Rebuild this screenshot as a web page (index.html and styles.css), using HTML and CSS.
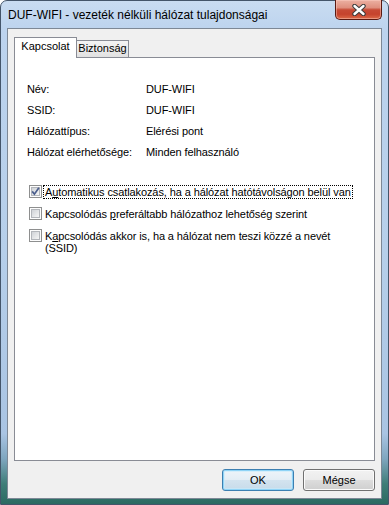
FILE: index.html
```html
<!DOCTYPE html>
<html lang="hu">
<head>
<meta charset="utf-8">
<title>DUF-WIFI - vezeték nélküli hálózat tulajdonságai</title>
<link rel="stylesheet" href="styles.css">
</head>
<body>
<div class="window">
  <div class="titlebar">
    <span class="title">DUF-WIFI - vezeték nélküli hálózat tulajdonságai</span>
    <button class="close" type="button" aria-label="Bezárás">
      <svg width="14" height="12" viewBox="0 0 14 12">
        <path d="M2.5 2 L11.5 10 M11.5 2 L2.5 10" stroke="#3b3b3b" stroke-width="4.4" stroke-linecap="round" fill="none"/>
        <path d="M2.5 2 L11.5 10 M11.5 2 L2.5 10" stroke="#ffffff" stroke-width="2.4" stroke-linecap="round" fill="none"/>
      </svg>
    </button>
  </div>
  <div class="client">
    <div class="tabs">
      <div class="tab active">Kapcsolat</div>
      <div class="tab">Biztonság</div>
    </div>
    <div class="panel">
      <dl class="props">
        <div class="row"><dt>Név:</dt><dd>DUF-WIFI</dd></div>
        <div class="row"><dt>SSID:</dt><dd>DUF-WIFI</dd></div>
        <div class="row"><dt>Hálózattípus:</dt><dd>Elérési pont</dd></div>
        <div class="row"><dt>Hálózat elérhetősége:</dt><dd>Minden felhasználó</dd></div>
      </dl>
      <div class="checks">
        <div class="check">
          <svg class="cb" width="13" height="13" viewBox="0 0 13 13">
            <defs><linearGradient id="cg1" x1="0" y1="0" x2="1" y2="1"><stop offset="0" stop-color="#cdd0d5"/><stop offset="1" stop-color="#f8f8f8"/></linearGradient></defs>
            <rect x="0.5" y="0.5" width="12" height="12" fill="#fdfdfd" stroke="#8e8f8f"/>
            <rect x="2.5" y="2.5" width="8" height="8" fill="url(#cg1)" stroke="#b3b6bb"/>
            <path d="M3.2 6.4 L5.4 9.2 L9.9 2.8" fill="none" stroke="#4a5d8c" stroke-width="1.7"/>
          </svg>
          <span class="lbl focus">A<u>u</u>tomatikus csatlakozás, ha a hálózat hatótávolságon belül van</span>
        </div>
        <div class="check">
          <svg class="cb" width="13" height="13" viewBox="0 0 13 13">
            <defs><linearGradient id="cg2" x1="0" y1="0" x2="1" y2="1"><stop offset="0" stop-color="#cdd0d5"/><stop offset="1" stop-color="#f8f8f8"/></linearGradient></defs>
            <rect x="0.5" y="0.5" width="12" height="12" fill="#fdfdfd" stroke="#8e8f8f"/>
            <rect x="2.5" y="2.5" width="8" height="8" fill="url(#cg2)" stroke="#b3b6bb"/>
          </svg>
          <span class="lbl">Kapcsolódás <u>p</u>referáltabb hálózathoz lehetőség szerint</span>
        </div>
        <div class="check">
          <svg class="cb" width="13" height="13" viewBox="0 0 13 13">
            <defs><linearGradient id="cg3" x1="0" y1="0" x2="1" y2="1"><stop offset="0" stop-color="#cdd0d5"/><stop offset="1" stop-color="#f8f8f8"/></linearGradient></defs>
            <rect x="0.5" y="0.5" width="12" height="12" fill="#fdfdfd" stroke="#8e8f8f"/>
            <rect x="2.5" y="2.5" width="8" height="8" fill="url(#cg3)" stroke="#b3b6bb"/>
          </svg>
          <span class="lbl">K<u>a</u>pcsolódás akkor is, ha a hálózat nem teszi közzé a nevét<br>(SSID)</span>
        </div>
      </div>
    </div>
    <div class="buttons">
      <button class="btn default" type="button">OK</button>
      <button class="btn" type="button">Mégse</button>
    </div>
  </div>
</div>
</body>
</html>
```

FILE: styles.css
```css
html, body {
  margin: 0;
  padding: 0;
  background: #ffffff;
}

body {
  width: 389px;
  height: 505px;
  overflow: hidden;
  font-family: "Liberation Sans", Arial, sans-serif;
  color: #000;
}

.window {
  box-sizing: border-box;
  width: 389px;
  height: 505px;
  border: 1px solid #44556a;
  border-radius: 7px 7px 0 0;
  padding: 0 6px 5px 6px;
  display: flex;
  flex-direction: column;
  background: linear-gradient(to bottom,
    #c9dcf1 0%,
    #bcd3ee 6%,
    #b6cfea 50%,
    #a9c4e3 86%,
    #7fa6bf 91%,
    #3f7d78 96%,
    #2b6a61 100%);
}

.titlebar {
  height: 27px;
  display: flex;
  align-items: flex-start;
}

.title {
  font-size: 12px;
  line-height: 12px;
  padding: 8px 0 0 1px;
  white-space: nowrap;
}

.close {
  margin: -1px 0 0 auto;
  width: 47px;
  height: 20px;
  box-sizing: border-box;
  padding: 0;
  border: 1px solid #5a1a12;
  border-top: none;
  border-radius: 0 0 5px 5px;
  background: linear-gradient(to bottom,
    #ecb0a2 0%,
    #df8f7e 40%,
    #c74a35 52%,
    #c5432d 75%,
    #dc6a48 100%);
  box-shadow: inset 0 0 0 1px rgba(255, 210, 200, 0.45);
  display: flex;
  align-items: center;
  justify-content: center;
}

.close svg {
  display: block;
}

.client {
  flex: 1;
  min-height: 0;
  border: 1px solid #7d8896;
  background: #f0f0f0;
  display: flex;
  flex-direction: column;
  padding: 8px 6px 7px 6px;
  font-size: 11px;
}

.tabs {
  display: flex;
  align-items: flex-end;
  height: 20px;
}

.tab {
  box-sizing: border-box;
  border: 1px solid #898c95;
  border-bottom: none;
  text-align: center;
  line-height: 13px;
  white-space: nowrap;
}

.tab.active {
  width: 63px;
  height: 21px;
  margin-bottom: -1px;
  padding-top: 2px;
  background: #ffffff;
  position: relative;
  z-index: 1;
}

.tab:not(.active) {
  width: 53px;
  height: 17px;
  margin-left: -1px;
  padding-top: 1px;
  background: linear-gradient(to bottom, #f4f4f4 0%, #ebebeb 50%, #e1e1e1 100%);
}

.panel {
  flex: 1;
  min-height: 0;
  border: 1px solid #898c95;
  background: #ffffff;
  padding: 21px 12px 0 12px;
  letter-spacing: -0.1px;
}

.props {
  margin: 0;
}

.row {
  display: flex;
  height: 21px;
  line-height: 21px;
}

.row dt {
  width: 119px;
  flex: none;
}

.row dd {
  margin: 0;
}

.checks {
  margin-top: 22px;
  padding-left: 2px;
  display: flex;
  flex-direction: column;
  gap: 8px;
}

.check {
  display: flex;
  align-items: flex-start;
}

.cb {
  display: block;
  flex: none;
}

.lbl {
  margin-left: 1px;
  padding: 0 1px;
  line-height: 12px;
  border: 1px dotted transparent;
}

.lbl.focus {
  border-color: #000;
}

.buttons {
  display: flex;
  justify-content: flex-end;
  gap: 9px;
  margin-top: 8px;
}

.btn {
  box-sizing: border-box;
  width: 72px;
  height: 22px;
  padding: 0;
  font-family: "Liberation Sans", Arial, sans-serif;
  font-size: 11px;
  color: #000;
  border-radius: 3px;
  border: 1px solid #707070;
  background: linear-gradient(to bottom, #f2f2f2 0%, #ebebeb 50%, #dddddd 51%, #cfcfcf 100%);
  box-shadow: inset 0 0 0 1px #fbfbfb;
}

.btn.default {
  border-color: #3c7fb1;
  background: linear-gradient(to bottom, #eef4f9 0%, #e3edf5 50%, #d3e3ef 51%, #c7dbea 100%);
  box-shadow: inset 0 0 0 1px #8fd3f6, inset 0 0 0 2px rgba(200, 235, 252, 0.6);
}
```
